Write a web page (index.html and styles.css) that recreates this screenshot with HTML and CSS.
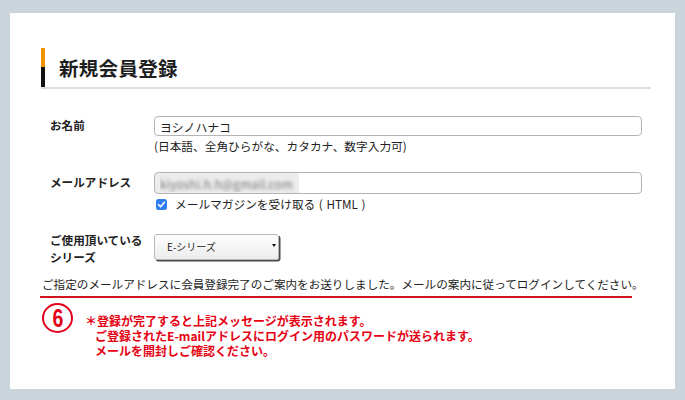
FILE: index.html
```html
<!DOCTYPE html>
<html lang="ja">
<head>
<meta charset="utf-8">
<title>新規会員登録</title>
<link rel="stylesheet" href="styles.css">
</head>
<body>
<div class="panel">
  <div class="heading">
    <h1 class="heading-title">新規会員登録</h1>
  </div>

  <div class="form">
    <div class="row row-name">
      <div class="label">お名前</div>
      <div class="field">
        <input class="text-input" type="text" value="ヨシノハナコ">
        <div class="hint">(日本語、全角ひらがな、カタカナ、数字入力可)</div>
      </div>
    </div>

    <div class="row row-mail">
      <div class="label label-mail">メールアドレス</div>
      <div class="field">
        <input class="text-input mail-input" type="text" value="kiyoshi.h.h@gmail.com">
        <label class="check">
          <svg class="check-box" width="11" height="11" viewBox="0 0 11 11"><rect x="0" y="0" width="11" height="11" rx="2.5" fill="#2f7ff0"/><path d="M2.6 5.7 L4.6 7.7 L8.4 3.3" fill="none" stroke="#fff" stroke-width="1.6" stroke-linecap="round" stroke-linejoin="round"/></svg>
          <span>メールマガジンを受け取る ( HTML )</span>
        </label>
      </div>
    </div>

    <div class="row row-series">
      <div class="label label-series">ご使用頂いている<br>シリーズ</div>
      <div class="field">
        <div class="select-wrap">
          <select class="select"><option>E-シリーズ</option></select>
        </div>
      </div>
    </div>
  </div>

  <p class="message">ご指定のメールアドレスに会員登録完了のご案内をお送りしました。メールの案内に従ってログインしてください。</p>

  <div class="notice">
    <div class="step"><span class="step-num">6</span></div>
    <p class="notice-text">＊登録が完了すると上記メッセージが表示されます。<br>ご登録されたE-mailアドレスにログイン用のパスワードが送られます。<br>メールを開封しご確認ください。</p>
  </div>
</div>
</body>
</html>
```

FILE: styles.css
```css
html, body {
  margin: 0;
  padding: 0;
}
body {
  background: #c9d5da;
  font-family: "Noto Sans CJK JP", "Noto Sans", sans-serif;
  color: #222;
  width: 685px;
  height: 400px;
  overflow: hidden;
}
.panel {
  margin: 13px 10px 0 10px;
  height: 376px;
  background: #fff;
  box-sizing: border-box;
  padding: 35px 24px 0 31px;
}
.heading {
  border-bottom: 2px solid #dedede;
  width: 610px;
}
.heading-title {
  margin: 0;
  height: 39px;
  border-left: 4px solid #000;
  border-image: linear-gradient(#f39200 0, #f39200 50%, #111 50%, #111 100%) 1;
  padding-left: 14px;
  font-size: 19.5px;
  font-weight: bold;
  line-height: 39px;
  color: #1e1e1e;
  letter-spacing: 0.3px;
}
.form {
  padding-left: 9px;
}
.row {
  display: grid;
  grid-template-columns: 104px 488px;
}
.row-name {
  margin-top: 27px;
}
.row-mail {
  margin-top: 18px;
}
.row-series {
  margin-top: 20px;
}
.label {
  font-size: 11.6px;
  font-weight: bold;
  line-height: 18px;
  color: #222;
  padding-top: 0;
}
.label-mail {
  padding-top: 1px;
}
.label-series {
  line-height: 17px;
  padding-top: 0;
}
.field {
  display: flex;
  flex-direction: column;
}
.text-input {
  box-sizing: border-box;
  width: 488px;
  height: 20px;
  margin: 0;
  border: 1px solid #b4b4b4;
  border-radius: 4px;
  padding: 0 5px;
  font-family: "Noto Sans CJK JP", sans-serif;
  font-size: 11.8px;
  color: #222;
  background: #fff;
  outline: none;
}
.mail-input {
  height: 22px;
  color: transparent;
  text-shadow: 0 0 3.5px rgba(90, 90, 90, 0.8);
  background: linear-gradient(to right, #ececec 0, #ececec 144px, #fff 144px);
  letter-spacing: 0.2px;
}
.hint {
  margin-top: 2px;
  font-size: 11.7px;
  line-height: 16px;
  color: #222;
}
.check {
  display: flex;
  align-items: center;
  margin-top: 2px;
  height: 16px;
  font-size: 11.7px;
  line-height: 16px;
  color: #222;
}
.check span {
  word-spacing: 1px;
}
.check-box {
  margin-left: 2px;
  margin-right: 8px;
  flex: none;
}
.select-wrap {
  position: relative;
  width: 127px;
  height: 28px;
}
.select {
  appearance: none;
  -webkit-appearance: none;
  box-sizing: border-box;
  width: 125px;
  height: 26px;
  margin: 0;
  border: 1px solid #b9b9b9;
  border-radius: 3px;
  padding: 0 0 0 12px;
  background: linear-gradient(#fdfdfd, #ececec);
  box-shadow: 1.5px 1.5px 0 #4a4a4a;
  font-family: "Noto Sans CJK JP", sans-serif;
  font-size: 10px;
  color: #222;
  outline: none;
}
.select-wrap::after {
  content: "";
  position: absolute;
  right: 5px;
  top: 12px;
  border-left: 2.5px solid transparent;
  border-right: 2.5px solid transparent;
  border-top: 3px solid #111;
}
.message {
  margin: 10px 0 0 -1px;
  width: 592px;
  padding: 0 0 4px 2px;
  box-sizing: border-box;
  border-bottom: 2px solid #d0141b;
  font-size: 11.6px;
  line-height: 16px;
  color: #222;
  white-space: nowrap;
}
.notice {
  display: flex;
  align-items: flex-start;
  margin-top: 5px;
  margin-left: 1px;
}
.step {
  box-sizing: border-box;
  width: 31px;
  height: 30px;
  border: 2.5px solid #e2001a;
  border-radius: 50%;
  display: flex;
  align-items: center;
  justify-content: center;
  flex: none;
}
.step-num {
  font-family: "Liberation Sans", sans-serif;
  font-weight: bold;
  font-size: 25px;
  line-height: 25px;
  color: #e2001a;
  transform: scaleX(0.78);
  display: block;
}
.notice-text {
  margin: 10px 0 0 22px;
  text-indent: -10px;
  font-size: 12px;
  font-weight: bold;
  line-height: 15px;
  color: #e60012;
  white-space: nowrap;
}
```
